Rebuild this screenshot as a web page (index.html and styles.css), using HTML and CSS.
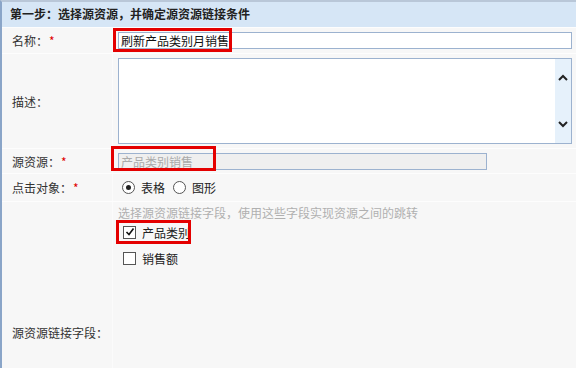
FILE: index.html
```html
<!DOCTYPE html>
<html lang="zh-CN">
<head>
    <meta charset="UTF-8">
    <title>选择源资源</title>
    <link rel="stylesheet" href="styles.css">
</head>
<body>
    <div class="panel">
        <div class="panel-title">第一步：选择源资源，并确定源资源链接条件</div>

        <div class="row row-name">
            <div class="label">名称：<span class="req">*</span></div>
            <div class="field">
                <input class="text-input" type="text" value="刷新产品类别月销售">
                <span class="mark mark-name"></span>
            </div>
        </div>

        <div class="row row-desc">
            <div class="label">描述：</div>
            <div class="field">
                <div class="textarea">
                    <div class="scrollbar">
                        <svg width="10" height="8" viewBox="0 0 10 8"><path d="M1 6 L5 2 L9 6" fill="none" stroke="#222" stroke-width="2"/></svg>
                        <svg width="10" height="8" viewBox="0 0 10 8"><path d="M1 2 L5 6 L9 2" fill="none" stroke="#222" stroke-width="2"/></svg>
                    </div>
                </div>
            </div>
        </div>

        <div class="row row-source">
            <div class="label">源资源：<span class="req">*</span></div>
            <div class="field">
                <div class="disabled-input">产品类别销售</div>
                <span class="mark mark-source"></span>
            </div>
        </div>

        <div class="row row-target">
            <div class="label">点击对象：<span class="req">*</span></div>
            <div class="field radios">
                <span class="radio checked"></span><span class="opt">表格</span>
                <span class="radio"></span><span class="opt">图形</span>
            </div>
        </div>

        <div class="row row-fields">
            <div class="label">源资源链接字段：</div>
            <div class="field fields-list">
                <div class="hint">选择源资源链接字段，使用这些字段实现资源之间的跳转</div>
                <div class="check-item first">
                    <span class="checkbox checked">
                        <svg width="10" height="10" viewBox="0 0 10 10"><path d="M1.5 5 L4 7.5 L8.5 1.5" fill="none" stroke="#111" stroke-width="1.6"/></svg>
                    </span>
                    <span class="opt">产品类别</span>
                    <span class="mark mark-check"></span>
                </div>
                <div class="check-item">
                    <span class="checkbox"></span>
                    <span class="opt">销售额</span>
                </div>
            </div>
        </div>
    </div>
</body>
</html>
```

FILE: styles.css
```css
body {
    margin: 0;
    font-family: "Noto Sans CJK SC", "Noto Sans", sans-serif;
    font-size: 12px;
    color: #333;
    background: #f7f7f7;
}

.panel {
    width: 576px;
    height: 368px;
    box-sizing: border-box;
    border-left: 2px solid #8aa5c8;
    border-top: 2px solid #b9c7d8;
    background: #f7f7f7;
    overflow: hidden;
}

.panel-title {
    height: 25px;
    line-height: 24px;
    padding-left: 8px;
    background: #d6e6f6;
    font-weight: bold;
    color: #222;
}

.row {
    display: grid;
    grid-template-columns: 111px 1fr;
    border-top: 1px solid #fdfdfd;
}

.label {
    display: flex;
    align-items: center;
    padding-left: 10px;
    border-right: 1px solid #fbfbfb;
}

.req {
    color: #e00000;
    margin-left: 1px;
}

.field {
    position: relative;
    display: flex;
    align-items: center;
    padding-left: 5px;
}

.row-name { height: 25px; }
.row-desc { height: 94px; }
.row-source { height: 24px; }
.row-target { height: 27px; }
.row-fields { height: 260px; }

.text-input {
    width: 454px;
    height: 17px;
    box-sizing: border-box;
    border: 1px solid #9cb2cf;
    padding: 0 2px;
    margin: 0;
    font-family: inherit;
    font-size: 12px;
    color: #111;
    background: #fff;
}

.textarea {
    width: 454px;
    height: 86px;
    box-sizing: border-box;
    border: 1px solid #9cb2cf;
    background: #fff;
    display: flex;
    justify-content: flex-end;
}

.scrollbar {
    width: 16px;
    background: #e6f1fb;
    display: flex;
    flex-direction: column;
    align-items: center;
    justify-content: space-between;
    padding: 15px 0 15px;
}

.disabled-input {
    width: 369px;
    height: 17px;
    box-sizing: border-box;
    border: 1px solid #9cb2cf;
    background: #efefef;
    color: #aaa;
    font-size: 12px;
    line-height: 15px;
    padding-left: 2px;
}

.radios {
    padding-left: 9px;
}

.radio {
    width: 11px;
    height: 11px;
    border: 1px solid #555;
    border-radius: 50%;
    background: #fff;
    position: relative;
}

.radio.checked::after {
    content: "";
    position: absolute;
    left: 3px;
    top: 3px;
    width: 5px;
    height: 5px;
    border-radius: 50%;
    background: #222;
}

.opt {
    margin-left: 6px;
    margin-right: 8px;
    color: #222;
}

.fields-list {
    flex-direction: column;
    align-items: flex-start;
}

.hint {
    color: #b0b0b0;
    margin-top: 3px;
    line-height: 16px;
}

.check-item {
    position: relative;
    display: flex;
    align-items: center;
    margin-left: 5px;
    height: 16px;
}

.check-item.first {
    margin-top: 3px;
    margin-bottom: 10px;
}

.checkbox {
    width: 11px;
    height: 11px;
    border: 1px solid #555;
    background: #fff;
    display: flex;
    align-items: center;
    justify-content: center;
}

.mark {
    position: absolute;
    border: 3px solid #e40000;
    pointer-events: none;
}

.mark-name {
    left: 0;
    top: 0;
    width: 113px;
    height: 18px;
}

.mark-source {
    left: -2px;
    top: -3px;
    width: 99px;
    height: 19px;
}

.mark-check {
    left: -7px;
    top: -4px;
    width: 69px;
    height: 18px;
}
```
